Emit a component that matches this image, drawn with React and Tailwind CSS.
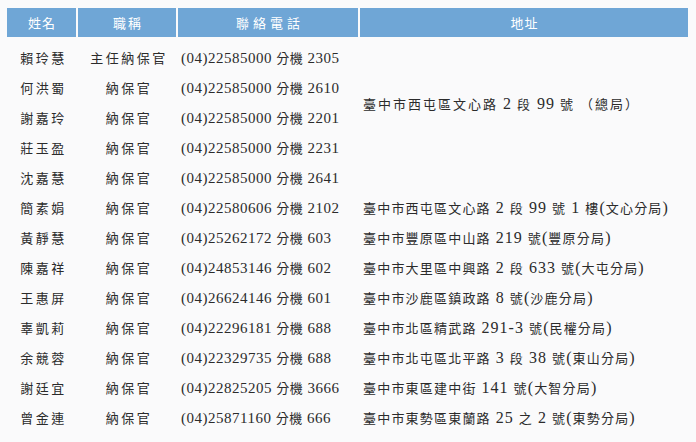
import React from 'react';

const ROWS = [
  { name: '賴玲慧', title: '主任納保官', phone: '(04)22585000 分機 2305' },
  { name: '何洪蜀', title: '納保官', phone: '(04)22585000 分機 2610' },
  { name: '謝嘉玲', title: '納保官', phone: '(04)22585000 分機 2201' },
  { name: '莊玉盈', title: '納保官', phone: '(04)22585000 分機 2231' },
  { name: '沈嘉慧', title: '納保官', phone: '(04)22585000 分機 2641' },
  { name: '簡素娟', title: '納保官', phone: '(04)22580606 分機 2102', addr: '臺中市西屯區文心路 2 段 99 號 1 樓(文心分局)' },
  { name: '黃靜慧', title: '納保官', phone: '(04)25262172 分機 603', addr: '臺中市豐原區中山路 219 號(豐原分局)' },
  { name: '陳嘉祥', title: '納保官', phone: '(04)24853146 分機 602', addr: '臺中市大里區中興路 2 段 633 號(大屯分局)' },
  { name: '王惠屏', title: '納保官', phone: '(04)26624146 分機 601', addr: '臺中市沙鹿區鎮政路 8 號(沙鹿分局)' },
  { name: '辜凱莉', title: '納保官', phone: '(04)22296181 分機 688', addr: '臺中市北區精武路 291-3 號(民權分局)' },
  { name: '余競蓉', title: '納保官', phone: '(04)22329735 分機 688', addr: '臺中市北屯區北平路 3 段 38 號(東山分局)' },
  { name: '謝廷宜', title: '納保官', phone: '(04)22825205 分機 3666', addr: '臺中市東區建中街 141 號(大智分局)' },
  { name: '曾金連', title: '納保官', phone: '(04)25871160 分機 666', addr: '臺中市東勢區東蘭路 25 之 2 號(東勢分局)' },
];

const MAIN_ADDR = '臺中市西屯區文心路 2 段 99 號 （總局）';

// split text so CJK runs and digit runs can get their own size
const Mixed = ({ text, cjk }) => (
  <span className="whitespace-pre">
    {text.split(/([^\x00-\x7f]+)/).map((s, i) =>
      /[^\x00-\x7f]/.test(s) ? (
        <span key={i} className={cjk}>{s}</span>
      ) : (
        <span key={i}>{s}</span>
      )
    )}
  </span>
);

const CJK = "font-['Noto_Sans_CJK_TC',sans-serif]";
const cell = 'h-[30px] flex items-center';

export default function App() {
  return (
    <div className="w-[696px] h-[442px] bg-[#fafafb] pt-2 pl-[7px] text-[#2b2b2b] font-['Liberation_Serif','Noto_Sans_CJK_TC',serif] overflow-hidden">
      {/* header */}
      <div className={`flex gap-[2px] h-[29px] text-white text-[13px] ${CJK}`}>
        <div className="w-[69px] bg-[#6fa6d6] flex items-center justify-center tracking-[1px] pl-[1px]">姓名</div>
        <div className="w-[98px] bg-[#6fa6d6] flex items-center justify-center tracking-[2px] pl-[2px]">職稱</div>
        <div className="w-[180px] bg-[#6fa6d6] flex items-center justify-center tracking-[4px] pl-[4px]">聯絡電話</div>
        <div className="w-[328px] bg-[#6fa6d6] flex items-center justify-center tracking-[1px] pl-[1px]">地址</div>
      </div>

      {/* body */}
      <div className="mt-[6px] grid grid-cols-[71px_100px_182px_328px] auto-rows-[30px]">
        {ROWS.map((r, i) => (
          <React.Fragment key={i}>
            <div className={`${cell} justify-center text-[13px] tracking-[2.5px] pl-[2px] ${CJK}`}>{r.name}</div>
            <div className={`${cell} justify-center text-[13px] tracking-[2.5px] pl-[2px] ${CJK}`}>{r.title}</div>
            <div className={`${cell} pl-[3px] text-[15px] tracking-[0.5px]`}>
              <Mixed text={r.phone} cjk={`text-[13px] ${CJK}`} />
            </div>
            {i === 0 && (
              <div className="row-span-5 flex items-center pl-[3px] pb-[28px] text-[16px] tracking-[1px] [text-spacing-trim:space-all]">
                <Mixed text={MAIN_ADDR} cjk={`text-[13px] tracking-[2px] ${CJK}`} />
              </div>
            )}
            {r.addr && (
              <div className={`${cell} pl-[3px] text-[16px] tracking-[1px]`}>
                <Mixed text={r.addr} cjk={`text-[13px] tracking-[1.2px] ${CJK}`} />
              </div>
            )}
          </React.Fragment>
        ))}
      </div>
    </div>
  );
}
